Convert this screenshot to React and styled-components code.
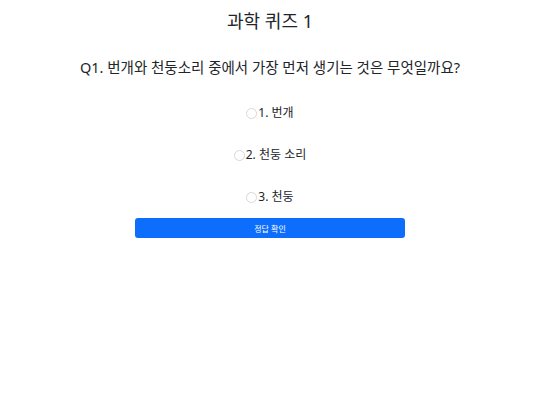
import React, { useState } from "react";
import styled, { createGlobalStyle } from "styled-components";

const GlobalStyle = createGlobalStyle`
    body {
        margin: 0;
        background: #ffffff;
        color: #212529;
        font-family: "Noto Sans", "Noto Sans CJK KR", sans-serif;
    }
`

const Page = styled.div`
    display: flex;
    flex-direction: column;
    align-items: center;
    padding-top: 9px;
`

const Title = styled.h1`
    margin: 0;
    font-size: 18px;
    font-weight: 400;
    line-height: 24px;
`

const Question = styled.h2`
    margin: 24px 0 0;
    font-size: 14.5px;
    font-weight: 400;
    line-height: 20px;
`

const Options = styled.div`
    display: flex;
    flex-direction: column;
    align-items: center;
    gap: 26px;
    margin-top: 28px;
`

const Option = styled.label`
    display: flex;
    align-items: center;
    font-size: 12px;
    line-height: 16px;
    cursor: pointer;
`

const Radio = styled.input`
    appearance: none;
    width: 11px;
    height: 11px;
    margin: 0 1px 0 0;
    border: 1px solid #d6d8db;
    border-radius: 50%;
    background: #fff;
    &:checked {
        border: 3px solid #0d6efd;
    }
`

const CheckButton = styled.button`
    width: 270px;
    height: 20px;
    margin-top: 13px;
    border: none;
    border-radius: 3px;
    background: #0d6efd;
    color: #fff;
    font-family: "Noto Sans", "Noto Sans CJK KR", sans-serif;
    font-size: 8px;
    cursor: pointer;
`

const options = ["1. 번개", "2. 천둥 소리", "3. 천둥"]

export default function App() {
    const [selected, setSelected] = useState(null)

    return (
        <Page>
            <GlobalStyle />
            <Title>과학 퀴즈 1</Title>
            <Question>Q1. 번개와 천둥소리 중에서 가장 먼저 생기는 것은 무엇일까요?</Question>
            <Options>
                {options.map((text, i) => (
                    <Option key={i}>
                        <Radio
                            type="radio"
                            name="q1"
                            checked={selected === i}
                            onChange={() => setSelected(i)}
                        />
                        {text}
                    </Option>
                ))}
            </Options>
            <CheckButton onClick={() => alert(selected === 0 ? "정답입니다!" : "다시 생각해 보세요.")}>정답 확인</CheckButton>
        </Page>
    )
}
